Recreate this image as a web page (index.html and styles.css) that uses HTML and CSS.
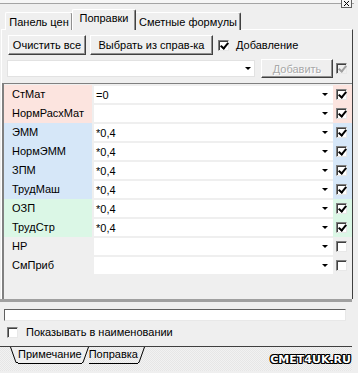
FILE: index.html
```html
<!DOCTYPE html>
<html>
  <head>
    <title>Поправки</title>
    <link rel="stylesheet" href="styles.css">
  </head>
  <body>
    <div class="window">
      <div class="topbar">
        <svg class="close" width="11" height="8" viewBox="0 0 11 8">
          <rect x="0.5" y="-1" width="10" height="8.5" fill="#f4f4f4" stroke="#606060" />
          <path d="M3 1 L8 6 M8 1 L3 6" stroke="#000" />
        </svg>
      </div>

      <div class="tabs">
        <div class="tab tab-prices">Панель цен</div>
        <div class="tab tab-active">Поправки</div>
        <div class="tab tab-formulas">Сметные формулы</div>
      </div>

      <div class="panel">
        <div class="toolbar">
          <button class="btn btn-clear">Очистить все</button>
          <button class="btn btn-pick">Выбрать из справ-ка</button>
          <span class="box checked"></span>
          <span class="check-text">Добавление</span>
        </div>

        <div class="add-row">
          <div class="combo"><span class="arrow"></span></div>
          <button class="btn btn-add" disabled>Добавить</button>
          <span class="box checked disabled"></span>
        </div>

        <div class="grid">
          <div class="row pink">
            <div class="label">СтМат</div>
            <div class="value">=0<span class="arrow"></span></div>
            <div class="flag"><span class="box checked"></span></div>
          </div>
          <div class="row pink">
            <div class="label">НормРасхМат</div>
            <div class="value"><span class="arrow"></span></div>
            <div class="flag"><span class="box checked"></span></div>
          </div>
          <div class="row blue">
            <div class="label">ЭММ</div>
            <div class="value">*0,4<span class="arrow"></span></div>
            <div class="flag"><span class="box checked"></span></div>
          </div>
          <div class="row blue">
            <div class="label">НормЭММ</div>
            <div class="value">*0,4<span class="arrow"></span></div>
            <div class="flag"><span class="box checked"></span></div>
          </div>
          <div class="row blue">
            <div class="label">ЗПМ</div>
            <div class="value">*0,4<span class="arrow"></span></div>
            <div class="flag"><span class="box checked"></span></div>
          </div>
          <div class="row blue">
            <div class="label">ТрудМаш</div>
            <div class="value">*0,4<span class="arrow"></span></div>
            <div class="flag"><span class="box checked"></span></div>
          </div>
          <div class="row green">
            <div class="label">ОЗП</div>
            <div class="value">*0,4<span class="arrow"></span></div>
            <div class="flag"><span class="box checked"></span></div>
          </div>
          <div class="row green">
            <div class="label">ТрудСтр</div>
            <div class="value">*0,4<span class="arrow"></span></div>
            <div class="flag"><span class="box checked"></span></div>
          </div>
          <div class="row">
            <div class="label">НР</div>
            <div class="value"><span class="arrow"></span></div>
            <div class="flag"><span class="box"></span></div>
          </div>
          <div class="row">
            <div class="label">СмПриб</div>
            <div class="value"><span class="arrow"></span></div>
            <div class="flag"><span class="box"></span></div>
          </div>
        </div>
      </div>

      <div class="splitter"></div>

      <div class="bottom">
        <div class="edit"></div>
        <div class="show-row">
          <span class="box"></span>
          <span class="check-text">Показывать в наименовании</span>
        </div>
      </div>

      <div class="btabs">
        <svg class="slope" width="8" height="17" viewBox="0 0 8 17">
          <polygon points="0,0 8,0 8,16 6,16" fill="#efefef" />
          <path d="M0.5 0 L6 15.5 L8 15.5" stroke="#000" fill="none" />
        </svg>
        <span class="btab btab-active">Примечание</span>
        <svg class="slope" width="7" height="17" viewBox="0 0 7 17">
          <polygon points="0,0 6,0 1,16 0,16" fill="#efefef" />
          <path d="M0 15.5 L1 15.5 L6.5 0" stroke="#000" fill="none" />
        </svg>
        <span class="btab">Поправка</span>
        <svg class="slope" width="7" height="17" viewBox="0 0 7 17">
          <path d="M0 15.5 L1 15.5 L6.5 0" stroke="#000" fill="none" />
        </svg>
        <span class="brand">CMET4UK.RU</span>
      </div>
    </div>
  </body>
</html>
```

FILE: styles.css
```css
body {
  margin: 0;
  background: #efefef;
  font-family: "Liberation Sans", Arial, sans-serif;
  font-size: 11px;
  color: #000;
}

.window {
  width: 354px;
  height: 373px;
  overflow: hidden;
  position: relative;
}

.topbar {
  height: 3px;
  border-bottom: 1px solid #a4a4a4;
  background: #f6f6f6;
}

.topbar .close {
  position: absolute;
  top: 0;
  right: 2px;
}

/* tabs */

.tabs {
  display: flex;
  align-items: flex-end;
  height: 26px;
  padding-left: 5px;
  margin-bottom: -1px;
  position: relative;
  z-index: 1;
}

.tab {
  height: 17px;
  line-height: 18px;
  text-align: center;
  white-space: nowrap;
  border: 1px solid;
  border-color: #fff #404040 transparent #fff;
  border-bottom: none;
  border-radius: 2px 2px 0 0;
  box-shadow: inset -1px 0 #909090;
  background: #efefef;
}

.tab-prices {
  width: 66px;
}

.tab-active {
  width: 62px;
  height: 20px;
  line-height: 17px;
  margin: 0 -1px;
  position: relative;
  z-index: 1;
}

.tab-formulas {
  width: 104px;
}

.panel {
  height: 269px;
  margin: 0 1px;
  border: 1px solid;
  border-color: #fff #404040 #404040 #fff;
  border-bottom: none;
}

/* buttons and checkboxes */

.btn {
  height: 20px;
  padding: 0 2px;
  white-space: nowrap;
  font-family: inherit;
  font-size: 11px;
  color: #000;
  background: #efefef;
  border: 1px solid;
  border-color: #fff #404040 #404040 #fff;
  box-shadow: inset -1px -1px #909090;
}

.btn:disabled {
  color: #a8a8a8;
  text-shadow: 1px 1px #fff;
}

.box {
  display: inline-block;
  position: relative;
  width: 9px;
  height: 9px;
  border: 1px solid;
  border-color: #808080 #e8e8e8 #e8e8e8 #808080;
  box-shadow: inset 1px 1px #404040;
  background: #fff;
  flex: none;
}

.box.checked::after {
  content: "";
  position: absolute;
  left: 3px;
  top: 0;
  width: 3px;
  height: 6px;
  border: solid #000;
  border-width: 0 2px 2px 0;
  transform: rotate(40deg);
}

.box.disabled {
  background: #efefef;
}

.box.disabled::after {
  border-color: #a0a0a0;
}

.check-text {
  margin-left: 7px;
}

.toolbar {
  display: flex;
  align-items: center;
  margin-top: 5px;
  padding-left: 6px;
}

.btn-clear {
  width: 78px;
}

.btn-pick {
  width: 123px;
  margin-left: 4px;
}

.toolbar .box {
  margin-left: 5px;
}

.add-row {
  display: flex;
  align-items: center;
  margin-top: 4px;
  padding-left: 5px;
  height: 19px;
}

.combo {
  width: 248px;
  height: 17px;
  background: #fff;
  border: 1px solid #e2e2e2;
  display: flex;
  justify-content: flex-end;
  align-items: center;
  box-sizing: border-box;
}

.combo .arrow {
  margin-right: 3px;
}

.btn-add {
  width: 72px;
  height: 19px;
  margin-left: 6px;
}

.add-row .box {
  margin-left: 3px;
}

.arrow {
  display: inline-block;
  width: 0;
  height: 0;
  border-left: 3px solid transparent;
  border-right: 3px solid transparent;
  border-top: 3px solid #000;
}

/* grid */

.grid {
  margin: 5px 0 0 0;
  height: 218px;
  border-top: 1px solid #808080;
  border-left: 2px solid #808080;
  padding-top: 1px;
  box-sizing: border-box;
}

.row {
  display: grid;
  grid-template-columns: 88px 241px 1fr;
  height: 19px;
}

.row .label {
  padding-left: 8px;
  line-height: 19px;
}

.row .value {
  margin: 1px 0 1px 2px;
  background: #fff;
  display: flex;
  align-items: center;
  padding: 0 5px 0 2px;
}

.row .value .arrow {
  margin-left: auto;
}

.row .flag {
  display: flex;
  align-items: center;
  padding-left: 3px;
}

.pink .label,
.pink .flag {
  background: #fce4df;
}

.blue .label,
.blue .flag {
  background: #d6e7f8;
}

.green .label,
.green .flag {
  background: #dbf7e6;
}

/* bottom part */

.splitter {
  height: 3px;
  background: #a0a0a0;
  margin-right: 2px;
}

.bottom {
  height: 44px;
  padding-top: 7px;
  box-sizing: border-box;
}

.edit {
  width: 342px;
  height: 12px;
  margin-left: 4px;
  box-sizing: border-box;
  background: #fff;
  border: 1px solid;
  border-color: #606060 #e8e8e8 #e8e8e8 #606060;
}

.show-row {
  display: flex;
  align-items: center;
  margin-top: 5px;
  padding-left: 7px;
}

.show-row .check-text {
  margin-left: 8px;
}

.btabs {
  display: flex;
  align-items: flex-start;
  height: 24px;
  border-top: 1px solid #404040;
  margin-right: 2px;
  padding-left: 10px;
  background: repeating-conic-gradient(#e6e6e6 0 25%, #f2f2f2 0 50%) 0 0 / 2px 2px;
}

.btab {
  height: 16px;
  line-height: 15px;
  border-bottom: 1px solid #000;
}

.btab-active {
  background: #efefef;
}

.brand {
  margin-left: auto;
  margin-right: 1px;
  margin-top: 6px;
  font-family: "DejaVu Sans", sans-serif;
  font-weight: bold;
  font-size: 11px;
  letter-spacing: 0;
  color: #fff;
  text-shadow: 1px 0 #000, -1px 0 #000, 0 1px #000, 0 -1px #000,
    1px 1px #000, -1px -1px #000, 1px -1px #000, -1px 1px #000;
}
```
